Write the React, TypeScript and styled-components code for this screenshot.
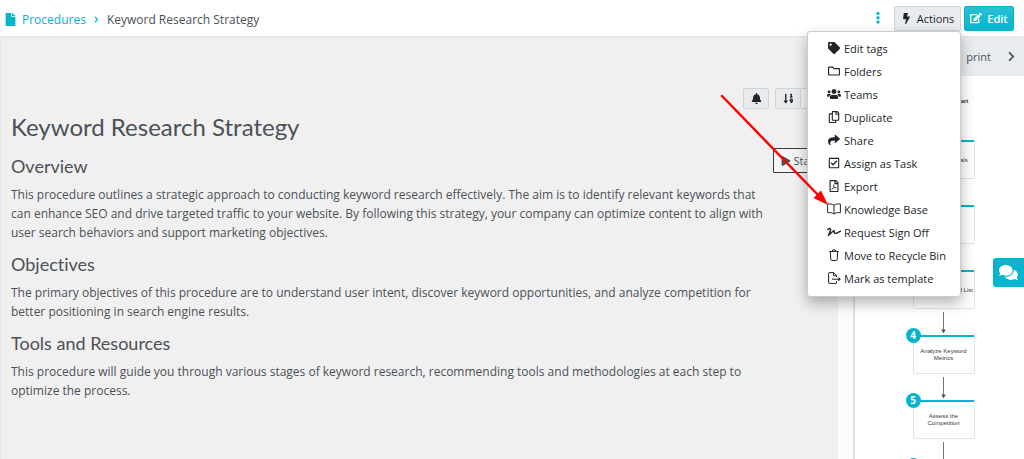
import React from "react";
import styled, { createGlobalStyle } from "styled-components";
import {
  FaBell, FaBolt, FaChevronRight, FaComments, FaEdit, FaFile, FaPlay, FaRegCheckSquare,
  FaRegCopy, FaRegFilePdf, FaRegFolder, FaShare, FaSignature, FaTag, FaUsers, FaSortNumericDown,
} from "react-icons/fa";

const teal = "#04b5cd";
const ink = "#4b5157";

const GlobalStyle = createGlobalStyle`
  * { box-sizing: border-box; }
  html, body { margin: 0; background: #fff; }
  body { color: ${ink}; font: 12px/19px "Open Sans", "Noto Sans", sans-serif; overflow: hidden; }
  button { font: inherit; cursor: pointer; }
  svg { display: block; flex: none; }
`;

const Page = styled.div`
  position: relative;
  display: flex;
  flex-direction: column;
  height: 100vh;
  overflow: hidden;
`;

const TopBar = styled.header`
  display: flex;
  align-items: center;
  justify-content: space-between;
  flex: none;
  height: 38px;
  padding: 0 10px 0 4px;
  border-bottom: 2px solid #e8e8e8;
`;

const Crumbs = styled.nav`
  display: flex;
  align-items: center;
  padding-top: 2px;
  font-size: 12px;
  font-weight: 500;
`;

const CrumbLink = styled.a`
  display: flex;
  align-items: center;
  gap: 5px;
  color: ${teal};
  text-decoration: none;
`;

const CrumbSeparator = styled.span`
  margin: 0 7px;
  color: ${teal};
`;

const TopActions = styled.div`
  position: relative;
  display: flex;
  align-items: center;
  gap: 3px;
`;

const MoreButton = styled.button`
  padding: 4px;
  margin-right: 7px;
  border: 0;
  background: none;
  color: ${teal};
`;

const TopButton = styled.button<{ $primary?: boolean }>`
  display: flex;
  align-items: center;
  justify-content: center;
  gap: 5px;
  width: ${(p) => (p.$primary ? 50 : 67)}px;
  height: 25px;
  padding: 0;
  border: 1px solid ${(p) => (p.$primary ? teal : "#ced4da")};
  border-radius: 2px;
  background: ${(p) => (p.$primary ? "linear-gradient(#2bc0d4, #04b5cd)" : "#e9ecef")};
  color: ${(p) => (p.$primary ? "#fff" : "#212529")};
  font-size: 11px;
  font-weight: ${(p) => (p.$primary ? 600 : 400)};
`;

const Menu = styled.ul`
  position: absolute;
  z-index: 5;
  top: 25px;
  right: 53px;
  width: 154px;
  margin: 0;
  padding: 5px 0 6px;
  border: 1px solid #ccc;
  border-radius: 3px;
  background: #fff;
  box-shadow: 0 6px 14px rgba(0, 0, 0, 0.3);
  list-style: none;
`;

const MenuItem = styled.button`
  display: flex;
  align-items: center;
  gap: 3px;
  width: 100%;
  height: 23px;
  padding: 0 0 0 19px;
  border: 0;
  background: none;
  color: #212529;
  font-size: 11px;
  white-space: nowrap;
`;

const IconSlot = styled.span`
  display: flex;
  justify-content: center;
  width: 14px;
`;

const Body = styled.div`
  display: grid;
  grid-template-columns: minmax(0, 1fr) 171px;
  flex: 1;
  min-height: 0;
  background: #fcfcfc;
`;

const ArticlePane = styled.main`
  margin-right: 15px;
  padding: 50px 12px 0 10px;
  border-left: 1px solid #e6e6e6;
  background: #f0f0f0;
`;

const Toolbar = styled.div`
  display: flex;
  justify-content: flex-end;
  gap: 6px;
`;

const ToolGroup = styled.div`
  display: flex;
`;

const ToolButton = styled.button`
  display: flex;
  align-items: center;
  justify-content: center;
  width: 26px;
  height: 21px;
  padding: 0;
  border: 1px solid #ced4da;
  border-radius: 2px;
  background: #e9eaec;
  color: #212529;
  & + & { margin-left: -1px; background: #f4f4f4; color: #e08a3c; }
`;

const Title = styled.h1`
  margin: 0 0 3px;
  font: 400 24px/36px Lato, sans-serif;
  font-variant-ligatures: none;
`;

const SectionHead = styled.div`
  display: flex;
  align-items: flex-end;
  justify-content: space-between;
  height: 32px;
`;

const Heading = styled.h2`
  margin: 0;
  font: 400 18px/27px Lato, sans-serif;
  font-variant-ligatures: none;
`;

const StartButton = styled.button`
  display: flex;
  align-items: center;
  align-self: flex-start;
  gap: 3px;
  height: 25px;
  padding: 0 7px;
  border: 1px solid #343a40;
  border-radius: 1px;
  background: #f4f4f4;
  color: ${ink};
  font-size: 11px;
`;

const Paragraph = styled.p`
  max-width: 762px;
  margin: 5px 0 9px;
`;

const ProcessPane = styled.aside`
  border-left: 2px solid #dee2e6;
  background: #fff;
`;

const ProcessHeader = styled.div`
  display: flex;
  align-items: center;
  justify-content: flex-end;
  gap: 15px;
  height: 38px;
  padding: 0 7px 2px 0;
  background: #e9ecef;
`;

const PlainButton = styled.button`
  padding: 0;
  border: 0;
  background: none;
  color: ${ink};
  font-size: 11px;
`;

const Flow = styled.div`
  display: flex;
  flex-direction: column;
  align-items: center;
  padding: 21px 0 0 8px;
  color: #343a40;
  font: 6px/7px "Liberation Sans", sans-serif;
`;

const FlowStart = styled.strong`
  margin-bottom: 9px;
  padding-left: 36px;
  line-height: 8px;
`;

const FlowNode = styled.div`
  position: relative;
  display: flex;
  align-items: center;
  justify-content: center;
  width: 62px;
  height: 39px;
  border: 1px solid #e3e3e3;
  border-top: 2px solid ${teal};
  border-radius: 2px;
  text-align: center;
`;

const Badge = styled.span`
  position: absolute;
  top: -9px;
  left: -8px;
  width: 15px;
  height: 15px;
  border-radius: 50%;
  background: ${teal};
  color: #fff;
  font: 700 10px/15px "Open Sans", sans-serif;
`;

const ChatButton = styled.button`
  position: absolute;
  z-index: 4;
  top: 258px;
  right: 0;
  display: flex;
  align-items: center;
  justify-content: center;
  width: 31px;
  height: 29px;
  padding: 0;
  border: 0;
  border-radius: 3px 0 0 3px;
  background: ${teal};
  color: #fff;
`;

const Pointer = styled.svg`
  position: absolute;
  z-index: 6;
  top: 94px;
  right: 194px;
  pointer-events: none;
`;

const BookIcon = () => (
  <svg width="14" height="12" viewBox="0 0 14 12" fill="none" stroke="currentColor">
    <path d="M7 2.300C5.500 1 3 .8.6 1v8.600C3 9.400 5.500 9.800 7 11c1.500-1.200 4-1.600 6.400-1.400V1C11 .8 8.500 1 7 2.300V11" strokeLinejoin="round" />
  </svg>
);

const BinIcon = () => (
  <svg width="10" height="12" viewBox="0 0 10 12" fill="none" stroke="currentColor">
    <path d="M.3 2.500h9.400M3.200 2.300 3.900.8h2.200l.7 1.500M1.300 2.700l.5 7.900q.1.900 1 .9h4.400q.9 0 1-.9l.5-7.900" />
  </svg>
);

const TemplateIcon = () => (
  <svg width="13" height="12" viewBox="0 0 13 12" fill="none" stroke="currentColor">
    <path d="M8.500 5V3.500L5.700.6H1.200Q.6.600.6 1.200v9.600q0 .6.6.6h6.700q.6 0 .6-.6V9.200M5.500.8v2.900h2.900M4 7.200h7" />
    <path d="m10.300 4.900 2.500 2.300-2.500 2.300z" fill="currentColor" stroke="none" />
  </svg>
);

const DotsIcon = () => (
  <svg width="4" height="12" viewBox="0 0 4 12" fill="currentColor">
    <rect x=".5" y="0" width="3" height="3" rx="1" />
    <rect x=".5" y="4.200" width="3" height="3" rx="1" />
    <rect x=".5" y="8.400" width="3" height="3" rx="1" />
  </svg>
);

const FlowArrow = () => (
  <svg width="9" height="26" viewBox="0 0 9 26">
    <path d="M4.500 3v20" stroke="#6c757d" />
    <path d="M2.300 20.500h4.400L4.500 24.500z" fill="#495057" />
  </svg>
);

const menuItems: [string, React.ReactNode][] = [
  ["Edit tags", <FaTag size={12} />],
  ["Folders", <FaRegFolder size={12} />],
  ["Teams", <FaUsers size={14} />],
  ["Duplicate", <FaRegCopy size={12} />],
  ["Share", <FaShare size={12} />],
  ["Assign as Task", <FaRegCheckSquare size={12} />],
  ["Export", <FaRegFilePdf size={12} />],
  ["Knowledge Base", <BookIcon />],
  ["Request Sign Off", <FaSignature size={14} />],
  ["Move to Recycle Bin", <BinIcon />],
  ["Mark as template", <TemplateIcon />],
];

const steps = ["Define Your Goals", "", "Create a Keyword List", "Analyze Keyword Metrics", "Assess the Competition", ""];

export default function App() {
  return (
    <Page>
      <GlobalStyle />
      <TopBar>
        <Crumbs aria-label="Breadcrumb">
          <CrumbLink href="#procedures"><FaFile size={13} />Procedures</CrumbLink>
          <CrumbSeparator><FaChevronRight size={7} /></CrumbSeparator>
          <span>Keyword Research Strategy</span>
        </Crumbs>
        <TopActions>
          <MoreButton aria-label="More"><DotsIcon /></MoreButton>
          <TopButton><FaBolt size={11} />Actions</TopButton>
          <TopButton $primary><FaEdit size={12} />Edit</TopButton>
          <Menu>
            {menuItems.map(([label, icon]) => (
              <li key={label}>
                <MenuItem><IconSlot>{icon}</IconSlot>{label}</MenuItem>
              </li>
            ))}
          </Menu>
        </TopActions>
      </TopBar>
      <Body>
        <ArticlePane>
          <Toolbar>
            <ToolButton aria-label="Notifications"><FaBell size={11} /></ToolButton>
            <ToolGroup>
              <ToolButton aria-label="Sort"><FaSortNumericDown size={11} /></ToolButton>
              <ToolButton aria-label="Favourite"><FaTag size={10} /></ToolButton>
            </ToolGroup>
          </Toolbar>
          <Title>Keyword Research Strategy</Title>
          <SectionHead>
            <Heading>Overview</Heading>
            <StartButton><FaPlay size={10} />Start</StartButton>
          </SectionHead>
          <Paragraph>
            This procedure outlines a strategic approach to conducting keyword research effectively. The aim is to identify relevant keywords that can enhance SEO and drive targeted traffic to your website. By following this strategy, your company can optimize content to align with user search behaviors and support marketing objectives.
          </Paragraph>
          <Heading>Objectives</Heading>
          <Paragraph>
            The primary objectives of this procedure are to understand user intent, discover keyword opportunities, and analyze competition for better positioning in search engine results.
          </Paragraph>
          <Heading>Tools and Resources</Heading>
          <Paragraph>
            This procedure will guide you through various stages of keyword research, recommending tools and methodologies at each step to optimize the process.
          </Paragraph>
        </ArticlePane>
        <ProcessPane>
          <ProcessHeader>
            <PlainButton>print</PlainButton>
            <PlainButton aria-label="Next"><FaChevronRight size={11} /></PlainButton>
          </ProcessHeader>
          <Flow>
            <FlowStart>Start</FlowStart>
            {steps.map((step, i) => (
              <React.Fragment key={i}>
                <FlowArrow />
                <FlowNode><Badge>{i + 1}</Badge>{step}</FlowNode>
              </React.Fragment>
            ))}
          </Flow>
        </ProcessPane>
      </Body>
      <ChatButton aria-label="Chat"><FaComments size={19} /></ChatButton>
      <Pointer width="110" height="112" viewBox="0 0 110 112">
        <path d="M2 2 100 103" stroke="#f00" strokeWidth="2.500" strokeLinecap="round" />
        <path d="m108 111-14.500-7 7.500-7.500z" fill="#f00" />
      </Pointer>
    </Page>
  );
}
